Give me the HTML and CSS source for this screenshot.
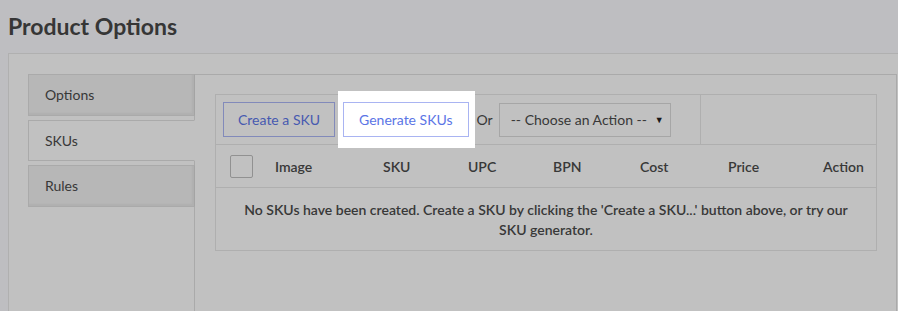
FILE: index.html
```html
<!doctype html>
<html lang="en">

<head>
    <meta charset="utf-8">
    <meta name="viewport" content="width=device-width, initial-scale=1.0">
    <title>Product Options</title>
    <link rel="stylesheet" href="styles.css">
</head>

<body>
    <h1 class="page-title">Product Options</h1>

    <div class="panel">
        <div class="tabs">
            <div class="tab">Options</div>
            <div class="tab active">SKUs</div>
            <div class="tab">Rules</div>
        </div>

        <div class="tab-content">
            <div class="sku-table">
                <div class="toolbar">
                    <div class="toolbar-actions">
                        <button type="button" class="btn">Create a SKU</button>
                        <span class="tour-target">
                            <span class="tour-highlight"></span>
                            <button type="button" class="btn">Generate SKUs</button>
                        </span>
                        <span class="or">Or</span>
                        <div class="select">
                            <span>-- Choose an Action --</span>
                            <span class="caret">&#9660;</span>
                        </div>
                    </div>
                    <div class="toolbar-spare"></div>
                </div>

                <div class="head-row">
                    <span class="checkbox"></span>
                    <span>Image</span>
                    <span>SKU</span>
                    <span>UPC</span>
                    <span>BPN</span>
                    <span>Cost</span>
                    <span>Price</span>
                    <span>Action</span>
                </div>

                <div class="empty-row">
                    No SKUs have been created. Create a SKU by clicking the 'Create a SKU...' button above, or try our SKU generator.
                </div>
            </div>
        </div>
    </div>

    <!-- guided tour dim layer -->
    <div class="tour-overlay"></div>
</body>

</html>
```

FILE: styles.css
```css
html, body {
    margin: 0;
    padding: 0;
    height: 100%;
}

body {
    background: #f7f8fb;
    font-family: 'Lato', 'Liberation Sans', sans-serif;
    color: #4a4a4a;
    overflow: hidden;
}

.page-title {
    margin: 0;
    padding: 11px 8px 0;
    height: 42px;
    font-size: 23px;
    line-height: 30px;
    font-weight: 700;
    color: #474747;
}

.panel {
    box-sizing: border-box;
    margin-left: 8px;
    height: calc(100vh - 53px);
    background: #fbfbfb;
    border-top: 1px solid #e6e6e6;
    border-left: 1px solid #e6e6e6;
    display: flex;
    padding: 20px 1px 0 19px;
    overflow: hidden;
}

/* left tabs */
.tabs {
    width: 167px;
    flex-shrink: 0;
    display: flex;
    flex-direction: column;
    gap: 4px;
    position: relative;
    z-index: 1;
}

.tab {
    height: 40px;
    line-height: 40px;
    padding-left: 16px;
    font-size: 14px;
    background: #eeeeee;
    border: 1px solid #dedede;
    border-right-color: #d6d6d6;
    box-shadow: inset -2px -2px 2px rgba(0, 0, 0, 0.04);
}

.tab.active {
    background: #fbfbfb;
    border-right-color: #fbfbfb;
    box-shadow: none;
    height: 39px;
    line-height: 39px;
}

/* right panel */
.tab-content {
    flex: 1;
    margin-left: -1px;
    background: #fbfbfb;
    border: 1px solid #dedede;
    border-bottom: none;
    padding: 19px 19px 0 20px;
}

.sku-table {
    border: 1px solid #e4e4e4;
}

.toolbar {
    display: flex;
    height: 49px;
    border-bottom: 1px solid #e4e4e4;
}

.toolbar-actions {
    width: 477px;
    display: flex;
    align-items: center;
    gap: 8px;
    padding-left: 7px;
    border-right: 1px solid #e4e4e4;
}

.toolbar-spare { flex: 1; }

.btn {
    height: 35px;
    padding: 0 14px;
    background: #fbfbfb;
    border: 1px solid #a9b4f2;
    color: #5b75e6;
    font-family: inherit;
    font-size: 14px;
}

.tour-target {
    position: relative;
    display: flex;
}

.tour-target .btn {
    position: relative;
    z-index: 12;
    background: #ffffff;
    padding: 0 15px;
}

.tour-highlight {
    position: absolute;
    top: -11px;
    bottom: -11px;
    left: -5px;
    right: -6px;
    background: #ffffff;
    z-index: 11;
}

.or {
    font-size: 14px;
    margin-right: -2px;
}

.select {
    box-sizing: border-box;
    width: 172px;
    height: 34px;
    padding: 0 6px 0 11px;
    border: 1px solid #d8d8d8;
    background: #fbfbfb;
    font-size: 14px;
    display: flex;
    align-items: center;
    justify-content: space-between;
}

.caret {
    font-size: 9px;
    color: #222;
}

.head-row {
    display: grid;
    grid-template-columns: 45px 108px 85px 85px 87px 88px 95px 1fr;
    align-items: center;
    height: 42px;
    padding-left: 14px;
    border-bottom: 1px solid #e4e4e4;
    font-size: 14px;
    font-weight: 600;
}

.checkbox {
    width: 21px;
    height: 21px;
    border: 1px solid #bdbdbd;
    border-radius: 2px;
    background: #fbfbfb;
}

.empty-row {
    padding: 12px 20px 10px;
    text-align: center;
    font-size: 14px;
    line-height: 20px;
    font-weight: 600;
}

.tour-overlay {
    position: fixed;
    inset: 0;
    background: rgba(0, 0, 0, 0.23);
    z-index: 10;
}
```
